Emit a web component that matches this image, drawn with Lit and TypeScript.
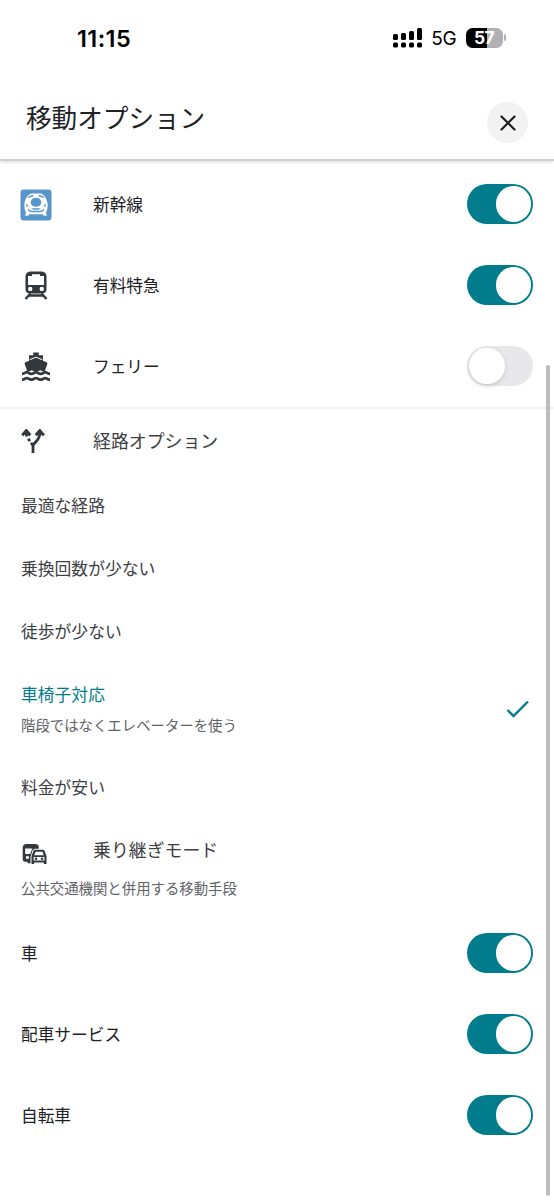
import { LitElement, html, css, svg, nothing } from "lit";
import { customElement, property } from "lit/decorators.js";

const shinkansen = svg`<svg width="32" height="33" viewBox="0 -1 32 33">
  <rect x=".5" y=".5" width="31" height="31" rx="3" fill="#5795cb"/>
  <path fill="#fff" d="M11.500 4.500h9c4 1.200 6.600 5.500 7.100 10.500.2 3.500-.2 6-1.600 8.500l.8 3.300h-3l-1-1.600H9.200l-1 1.600h-3L6 23.500c-1.400-2.500-1.800-5-1.600-8.500.5-5 3.100-9.300 7.100-10.500z"/>
  <path stroke="#5795cb" stroke-width="1.500" fill="none" d="M8.300 8.200l5-1.700M23.700 8.200l-5-1.700M8 20.500l2.500 2h11l2.500-2"/>
  <path fill="#5795cb" d="M11.500 19.300h9l-1.500 1.500h-6z"/>
  <ellipse cx="16" cy="13.300" rx="5.300" ry="4.500" fill="#5795cb"/>
  <path fill="#5795cb" d="M6.300 14.500l2.400 2.700-2.400.3zM25.700 14.500l-2.400 2.700 2.400.3z"/>
</svg>`;

const train = svg`<svg width="24" height="30" viewBox="0 0 24 30">
  <path fill="#33383d" fill-rule="evenodd" d="M7.500 1.500h9c4 0 6 1.800 6 5v12.700c0 2.800-1.700 4.300-4.500 4.300H6c-2.800 0-4.500-1.500-4.500-4.300V6.500c0-3.200 2-5 6-5zM4 6v9h16V6h-4V4.200H8V6zM6.200 16.700a2.200 2.200 0 1 0 0 4.400 2.200 2.200 0 0 0 0-4.400zM17.800 16.700a2.200 2.200 0 1 0 0 4.400 2.200 2.200 0 0 0 0-4.400z"/>
  <path stroke="#33383d" stroke-width="2.500" fill="none" d="M6.500 23.500L1.500 29M17.500 23.500l5 5.500M4.500 25.600h15"/>
</svg>`;

const ferry = svg`<svg width="30" height="32" viewBox="0 -2 30 32">
  <path fill="#33383d" d="M12.200.5h5.600v2.700h4.200v5.600l3.500 1.500c.8.400 1 .8.800 1.600L23.700 19.500c-1.500.2-2.800-.2-4.300-1.200-2.900 1.900-5.900 1.900-8.800 0-1.500 1-2.800 1.400-4.300 1.200l-2.600-7.600c-.2-.8 0-1.200.8-1.600L8 8.800V3.200h4.200z"/>
  <path stroke="#fff" stroke-width="1" fill="none" d="M8.500 7.800L15 5.200l6.500 2.600"/>
  <path stroke="#33383d" stroke-width="2.700" fill="none" d="M1 21.800c3 0 3.200-1.700 4.700-1.700s2.200 1.700 4.700 1.700 3.100-1.700 4.600-1.700 2.200 1.700 4.700 1.700 3.100-1.700 4.600-1.700 1.700 1.700 4.700 1.700M1 27.700c3 0 3.200-1.700 4.700-1.700s2.200 1.700 4.700 1.700 3.100-1.700 4.600-1.700 2.200 1.700 4.700 1.700 3.100-1.700 4.600-1.700 1.700 1.700 4.700 1.700"/>
</svg>`;

const fork = svg`<svg width="24" height="26" viewBox="0 0 24 26">
  <path stroke="#33383d" stroke-width="2.800" fill="none" d="M12 25v-7.500M12 18c0-4 7-4 7-14M5.300 3.500c0 2 .2 3.600.8 5M7.200 10.700l1.700 2.400M10 14.700l2 2.800"/>
  <path fill="#33383d" stroke="#33383d" d="M5.300 1L.7 6.300l1.500 1.400 3.100-2.500 3.100 2.500 1.500-1.400zM18.800 1l-4.600 5.300 1.500 1.400 3.100-2.500 3.100 2.500 1.500-1.400z"/>
</svg>`;

const transfer = svg`<svg width="26" height="22" viewBox="-1 0 26 22">
  <path fill="#33383d" fill-rule="evenodd" d="M4.500 0h8.500c2.400 0 3.800 1.200 3.800 3.200v1.600h-4l-2.300 1.500-1.400 5.200v7.800H5.500v-1.600H3.100C1.600 17.700.7 16.700.7 15.200V4c0-2.700 1.300-4 3.800-4zM3.200 4.500V10h5l1.700-4.700.8-.8zM5.400 11.800a1.600 1.600 0 1 0 0 3.200 1.600 1.600 0 0 0 0-3.200z"/>
  <path fill="#fff" d="M12.300 5h9.200l3.500 7.500V20H8.500v-7.500z"/>
  <path fill="#33383d" fill-rule="evenodd" d="M12.900 5.800h8.200c.7 0 1.200.3 1.400 1l2 5.200v8h-2.700v-1.600h-9.600V20H9.500v-8l2-5.200c.2-.7.700-1 1.400-1zM13.500 7.800l-1.200 3.400h9.400l-1.200-3.400zM11.600 13v3.600h10.800V13z"/>
  <circle cx="14" cy="14.800" r="1.300" fill="#33383d"/><circle cx="20" cy="14.800" r="1.300" fill="#33383d"/>
</svg>`;

@customElement("option-switch")
class OptionSwitch extends LitElement {
  @property({ type: Boolean }) on = false;
  static styles = css`
    :host { display: block; flex: none; }
    .track {
      box-sizing: border-box; width: 66px; height: 40px; border-radius: 20px;
      padding: 2px; display: flex; align-items: center; background: #e8e8ea;
    }
    .on { background: #007c8d; justify-content: flex-end; }
    .thumb { width: 35.500px; height: 35.500px; border-radius: 50%; background: #fff; box-shadow: 0 2px 5px rgba(0, 0, 0, 0.14); }
    .on .thumb { box-shadow: none; }
  `;
  render() {
    return html`<div class="track ${this.on ? "on" : ""}"><div class="thumb"></div></div>`;
  }
}

@customElement("app-root")
class AppRoot extends LitElement {
  static styles = css`
    :host {
      display: block; position: relative; height: 1200px; overflow: hidden; background: #fff;
      font-family: "Noto Sans CJK JP", sans-serif; color: #202124; line-height: 1;
    }
    svg { display: block; flex: none; }
    .status { display: flex; height: 76px; align-items: center; box-sizing: border-box; padding: 0 48.500px 0 77px; font-family: Inter, sans-serif; color: #000; }
    .time { font-size: 23.500px; font-weight: 600; letter-spacing: 0.4px; flex: 1; padding-top: 1px; }
    .network { font-size: 19px; letter-spacing: -0.3px; margin: 1px 9px 0 9px; }
    .battery { display: flex; align-items: center; margin-top: -1px; }
    .cell {
      width: 37px; height: 20px; border-radius: 6.500px; display: grid; place-items: center;
      background: linear-gradient(90deg, #000 57%, #b1b1b3 57%); color: #fff; font-size: 17.500px; font-weight: 700; letter-spacing: -0.6px;
    }
    .tip { width: 2px; height: 7px; border-radius: 0 2px 2px 0; background: #b1b1b3; margin-left: 1px; }
    .header {
      display: flex; justify-content: space-between; height: 85px; box-sizing: border-box;
      padding: 25px 26px 0 26px; border-bottom: 2px solid #cfcfcf; box-shadow: 0 3px 3px -1px rgba(0, 0, 0, 0.1);
    }
    .title { font-size: 25.600px; line-height: 32px; margin: 0; font-weight: 400; }
    .close { width: 41px; height: 41px; border-radius: 50%; background: #f2f2f2; display: grid; place-items: center; margin-top: 1px; }
    .list { padding-top: 2.500px; }
    .row { display: flex; align-items: center; box-sizing: border-box; height: 81px; padding: 0 21px; font-size: 16.700px; }
    .label { flex: 1; }
    .icon { width: 72px; display: flex; }
    .slot { width: 30px; display: flex; justify-content: center; }
    .modes { border-bottom: 2px solid #f2f2f3; }
    .section { height: 64px; font-size: 17.900px; color: #3c4043; }
    .option { height: 63px; font-size: 16.800px; color: #3c4043; }
    .options { padding-top: 1px; }
    .tall { height: 93.500px; }
    .active { color: #007c8d; }
    .note { font-size: 14.400px; color: #5f6368; margin-top: 15px; }
    .lowered { padding-top: 9px; }
    .transfer { height: 62px; }
    .section-note { font-size: 14.400px; color: #5f6368; padding: 0 21px; height: 31.500px; display: flex; align-items: flex-start; }
    .scroll { position: absolute; right: 4px; top: 365px; width: 4px; height: 831px; border-radius: 2px; background: #bcbcbc; }
  `;

  private toggleRow(label: string, on: boolean, icon: unknown = nothing) {
    return html`<div class="row">
      ${icon === nothing ? nothing : html`<div class="icon"><div class="slot">${icon}</div></div>`}
      <div class="label">${label}</div><option-switch ?on=${on}></option-switch>
    </div>`;
  }

  private sectionRow(label: string, icon: unknown, lowered = false) {
    return html`<div class="row section ${lowered ? "transfer" : ""}"><div class="icon ${lowered ? "lowered" : ""}">${icon}</div><div class="label">${label}</div></div>`;
  }

  private optionRow(label: string) {
    return html`<div class="row option">${label}</div>`;
  }

  render() {
    return html`
      <div class="status">
        <div class="time">11:15</div>
        <svg width="29" height="20" viewBox="0 0 29 20">
          <rect x="0" y="6" width="5" height="6" rx="1.500"/><rect x="8" y="5" width="5" height="7" rx="1.500"/>
          <rect x="16" y="3" width="5" height="9" rx="1.500"/><rect x="24" y="0" width="5" height="12" rx="1.500"/>
          <rect x="0" y="14.500" width="5" height="5" rx="1.500"/><rect x="8" y="14.500" width="5" height="5" rx="1.500"/>
          <rect x="16" y="14.500" width="5" height="5" rx="1.500"/><rect x="24" y="14.500" width="5" height="5" rx="1.500"/>
        </svg>
        <div class="network">5G</div>
        <div class="battery"><div class="cell">57</div><div class="tip"></div></div>
      </div>
      <div class="header">
        <h1 class="title">移動オプション</h1>
        <div class="close">
          <svg width="16" height="16" viewBox="0 0 16 16"><path d="M1.500 1.500l13 13M14.500 1.500l-13 13" stroke="#1f1f1f" stroke-width="2.200" stroke-linecap="round"/></svg>
        </div>
      </div>
      <div class="list">
        <div class="modes">
          ${this.toggleRow("新幹線", true, shinkansen)}
          ${this.toggleRow("有料特急", true, train)}
          ${this.toggleRow("フェリー", false, ferry)}
        </div>
        ${this.sectionRow("経路オプション", fork)}
        <div class="options">
          ${["最適な経路", "乗換回数が少ない", "徒歩が少ない"].map((o) => this.optionRow(o))}
          <div class="row option tall">
            <div class="label">
              <div class="active">車椅子対応</div>
              <div class="note">階段ではなくエレベーターを使う</div>
            </div>
            <svg width="30" height="20" viewBox="0 0 30 20"><path d="M4.500 11l6 6L25 2.500" stroke="#007c8d" stroke-width="2.400" fill="none"/></svg>
          </div>
          ${this.optionRow("料金が安い")}
        </div>
        ${this.sectionRow("乗り継ぎモード", transfer, true)}
        <div class="section-note">公共交通機関と併用する移動手段</div>
        ${this.toggleRow("車", true)}
        ${this.toggleRow("配車サービス", true)}
        ${this.toggleRow("自転車", true)}
      </div>
      <div class="scroll"></div>
    `;
  }
}
